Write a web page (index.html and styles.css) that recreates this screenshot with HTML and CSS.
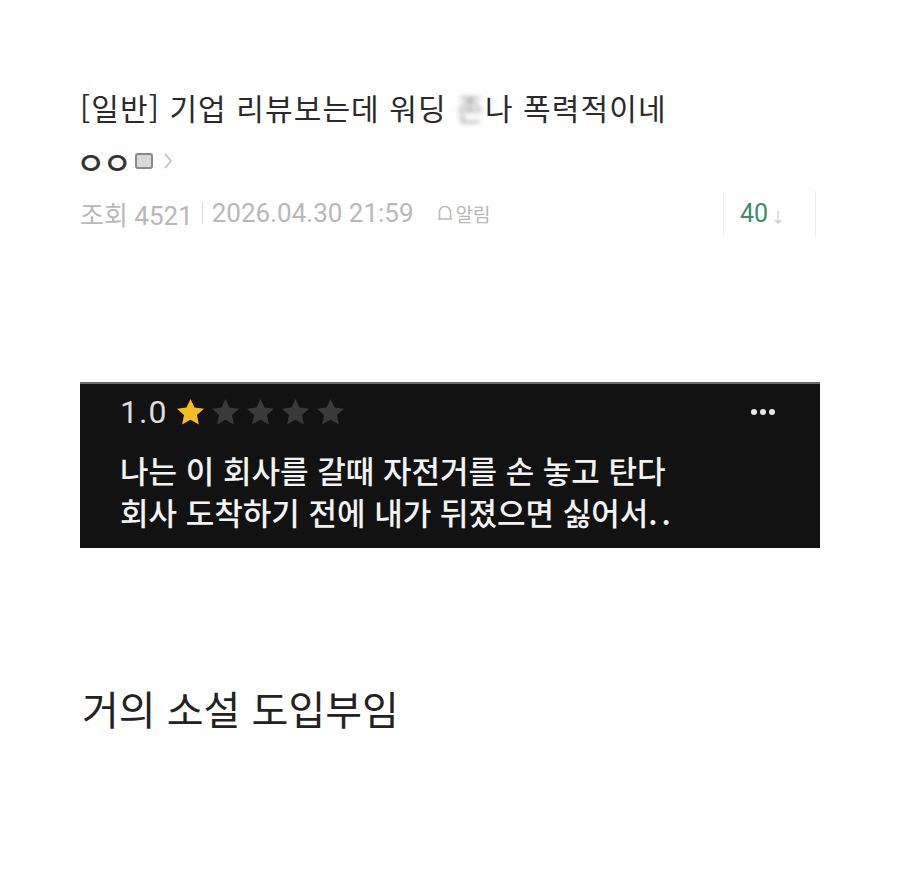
FILE: index.html
```html
<!DOCTYPE html>
<html lang="ko">
<head>
    <meta charset="UTF-8">
    <meta name="viewport" content="width=device-width, initial-scale=1.0">
    <title>기업 리뷰보는데 워딩 폭력적이네</title>
    <link rel="stylesheet" href="styles.css">
</head>
<body>

    <div class="post">
        <div class="post-head">
            <h1 class="title">[일반] 기업 리뷰보는데 워딩 <span class="masked">존</span>나 폭력적이네</h1>

            <div class="writer">
                <span class="nick">ㅇㅇ</span>
                <span class="nick-icon"></span>
                <svg class="chev" width="12" height="20" viewBox="0 0 12 20">
                    <path d="M3 3 L9 10 L3 17" fill="none" stroke="#bbb" stroke-width="1.5"/>
                </svg>
            </div>

            <div class="meta">
                <span>조회 4521</span>
                <span class="bar"></span>
                <span>2026.04.30 21:59</span>
                <span class="alarm">
                    <svg width="18" height="20" viewBox="0 0 18 20">
                        <path d="M2 16 H16 M3.5 16 V9 a5.5 5.5 0 0 1 11 0 V16" fill="none" stroke="#bbb" stroke-width="1.6"/>
                    </svg>알림
                </span>
                <span class="reply-count">40<span class="down">↓</span></span>
            </div>
        </div>

        <div class="review">
            <div class="review-top">
                <div class="rating">
                    <span class="score">1.0</span>
                    <svg class="star on" viewBox="0 0 24 24"><path d="M12 1.5 L15.1 8.2 L22.5 9 L17 14 L18.5 21.3 L12 17.6 L5.5 21.3 L7 14 L1.5 9 L8.9 8.2 Z"/></svg>
                    <svg class="star" viewBox="0 0 24 24"><path d="M12 1.5 L15.1 8.2 L22.5 9 L17 14 L18.5 21.3 L12 17.6 L5.5 21.3 L7 14 L1.5 9 L8.9 8.2 Z"/></svg>
                    <svg class="star" viewBox="0 0 24 24"><path d="M12 1.5 L15.1 8.2 L22.5 9 L17 14 L18.5 21.3 L12 17.6 L5.5 21.3 L7 14 L1.5 9 L8.9 8.2 Z"/></svg>
                    <svg class="star" viewBox="0 0 24 24"><path d="M12 1.5 L15.1 8.2 L22.5 9 L17 14 L18.5 21.3 L12 17.6 L5.5 21.3 L7 14 L1.5 9 L8.9 8.2 Z"/></svg>
                    <svg class="star" viewBox="0 0 24 24"><path d="M12 1.5 L15.1 8.2 L22.5 9 L17 14 L18.5 21.3 L12 17.6 L5.5 21.3 L7 14 L1.5 9 L8.9 8.2 Z"/></svg>
                </div>
                <svg class="more" width="26" height="8" viewBox="0 0 26 8">
                    <circle cx="4" cy="4" r="3" fill="#e8e8e8"/>
                    <circle cx="13" cy="4" r="3" fill="#e8e8e8"/>
                    <circle cx="22" cy="4" r="3" fill="#e8e8e8"/>
                </svg>
            </div>
            <p class="review-text">나는 이 회사를 갈때 자전거를 손 놓고 탄다<br>회사 도착하기 전에 내가 뒤졌으면 싫어서<span class="dots">..</span></p>
        </div>

        <p class="comment">거의 소설 도입부임</p>
    </div>

</body>
</html>
```

FILE: styles.css
```css
body {
    margin: 0;
    background: #fff;
    font-family: "Noto Sans CJK KR", "Noto Sans", sans-serif;
    color: #222;
}

.post {
    padding: 85px 80px 0 80px;
    width: 740px;
}

.title {
    margin: 0;
    font-size: 30px;
    font-weight: 400;
    color: #2a2a2a;
    line-height: 44px;
    letter-spacing: 1.1px;
}

.masked {
    color: #999;
    filter: blur(2.5px);
}

.writer {
    display: flex;
    align-items: center;
    gap: 6px;
    margin-top: 15px;
    height: 34px;
}

.nick {
    margin-left: -4px;
    font-size: 32px;
    font-weight: 500;
    color: #333;
    letter-spacing: -3px;
    line-height: 34px;
}

.nick-icon {
    width: 14px;
    height: 12px;
    border: 2px solid #8a8a8a;
    border-radius: 3px;
    background: #d8d8d8;
}

.chev {
    margin-left: 3px;
}

.meta {
    display: flex;
    align-items: center;
    margin-top: 15px;
    font-family: Roboto, "Noto Sans CJK KR", sans-serif;
    font-size: 26px;
    color: #b8b8b8;
    height: 40px;
}

.bar {
    width: 1px;
    height: 22px;
    background: #ddd;
    margin: 0 9px;
}

.alarm {
    display: flex;
    align-items: center;
    gap: 2px;
    margin-left: 22px;
    font-family: "Noto Sans CJK KR", sans-serif;
    font-size: 19px;
}

.reply-count {
    margin-left: auto;
    margin-right: 4px;
    padding: 8px 30px 8px 16px;
    border-left: 1px solid #f4f4f4;
    border-right: 1px solid #eeeeee;
    color: #3f8a6e;
    font-size: 25px;
}

.down {
    font-size: 14px;
    color: #c8c8c8;
    margin-left: 3px;
}

.review {
    margin-top: 149px;
    background: #121212;
    border-top: 2px solid #6a6a6a;
    height: 164px;
    padding: 0 40px;
    color: #eee;
}

.review-top {
    display: flex;
    justify-content: space-between;
    align-items: center;
    height: 56px;
}

.rating {
    display: flex;
    align-items: center;
    gap: 4px;
}

.score {
    font-family: Roboto, sans-serif;
    font-size: 32px;
    letter-spacing: 1px;
    color: #ddd;
    margin-right: 4px;
}

.star {
    width: 31px;
    height: 31px;
    fill: #3a3a3a;
}

.star.on {
    fill: #f5bd1f;
}

.more {
    margin-right: 4px;
}

.review-text {
    margin: 9px 0 0 0;
    font-size: 31px;
    font-weight: 500;
    line-height: 42px;
    color: #f2f2f2;
}

.dots {
    letter-spacing: 4px;
}

.comment {
    margin: 136px 0 0 2px;
    font-size: 40px;
    line-height: 48px;
    color: #222;
}
```
